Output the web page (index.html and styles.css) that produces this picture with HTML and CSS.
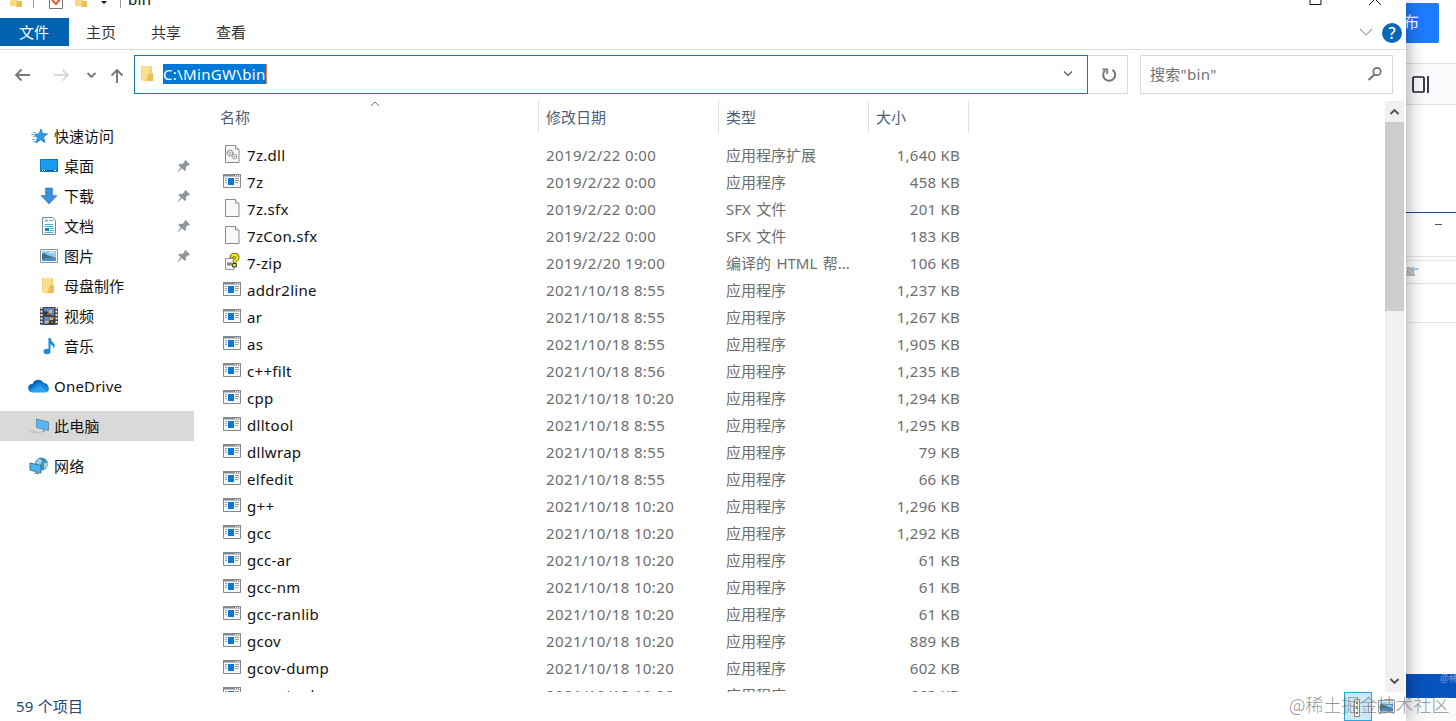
FILE: index.html
```
<!DOCTYPE html>
<html lang="zh-CN">

<head>
    <meta charset="UTF-8">
    <meta name="viewport" content="width=device-width, initial-scale=1.0">
    <title>bin</title>
    <link rel="stylesheet" href="styles.css">
</head>

<body>
    <!-- Icons -->
    <svg class="sprite">
        <symbol id="i-folder" viewBox="0 0 16 18">
            <path d="M1 1h10v15H4l-3-1z" fill="#f3d27a" />
            <path d="M2 1h8v13l-4 3-4-2z" fill="#fbe08f" />
            <path d="M9 8h4v8H6z" fill="#eebf58" />
            <path d="M10 1h2v8h-2z" fill="#f6d274" />
        </symbol>
        <symbol id="i-app" viewBox="0 0 18 14">
            <path d="M.5.5h17v13H.5z" fill="#f7f8f9" stroke="#85898d" />
            <path d="M0 0h18v2.500H0z" fill="#85898d" />
            <path d="M12 1h1v1h-1zM14 1h1v1h-1zM16 1h1v1h-1z" fill="#eee" />
            <path d="M5 4h6v7H5z" fill="#0a78d4" />
            <path d="M2 4.500h2M2 6.500h2M2 8.500h2M12 4.500h4M12 6.500h4M12 8.500h3" stroke="#9a9da0" />
        </symbol>
        <symbol id="i-file" viewBox="0 0 18 18">
            <path d="M2.5.5h10l3.500 3.500v13.500H2.500z" fill="#f8f8f8" stroke="#8b8b8b" />
            <path d="M12.500.5v3.500h3.500" fill="#fff" stroke="#8b8b8b" />
        </symbol>
        <symbol id="i-dll" viewBox="0 0 18 18">
            <use href="#i-file" />
            <circle cx="7" cy="8" r="2.800" fill="none" stroke="#8c9196" stroke-width="1.400" stroke-dasharray="1.500 .5" />
            <circle cx="7" cy="8" r="1" fill="none" stroke="#8c9196" stroke-width=".7" />
            <circle cx="11.500" cy="11.500" r="2.200" fill="#f8f8f8" stroke="#8c9196" stroke-width="1.200" stroke-dasharray="1.400 .5" />
            <circle cx="11.500" cy="11.500" r=".7" fill="#8c9196" />
        </symbol>
        <symbol id="i-chm" viewBox="0 0 18 18">
            <path d="M2.500 5.500h8.500v11H2.500z" fill="#f5f5f5" stroke="#999" />
            <path d="M4 9.500h5v3H4z" fill="#888" />
            <path d="M8.500 5Q8.500 2 11.500 2t3 2.500q0 1.500-2 2.500-1 .7-1 2.500" fill="none" stroke="#555300" stroke-width="4" />
            <path d="M8.500 4.500Q8.500 2 11.500 2t3 2.500q0 1.500-2 2.500-1 .7-1 2" fill="none" stroke="#f4ed16" stroke-width="2.400" />
            <path d="M9.700 10.500h3.600v3.500H9.700z" fill="#f4ed16" stroke="#333" />
        </symbol>
        <symbol id="i-star" viewBox="0 0 18 18">
            <path d="M11 2l1.500 4.600 5 .3-4 3.300 1.500 5.300-4.500-2.800-4.500 3.300 1.500-5.300-3.500-3.300 5-.5z" fill="#2f9ce8" stroke="#1c79bd" stroke-width=".8" />
            <path d="M3 5.500h3M1 7.500h4M3 9.500h3M2 12.500h3M3 14.500h3" stroke="#75b9e8" />
        </symbol>
        <symbol id="i-desktop" viewBox="0 0 18 18">
            <path d="M.5 2.500h17v12H.5z" fill="#1b9bf0" stroke="#0876c5" />
            <path d="M1 13.500h16" stroke="#075c9e" />
            <path d="M2 13.500h1M4 13.500h1M14 13.500h2" stroke="#fff" />
        </symbol>
        <symbol id="i-download" viewBox="0 0 18 18">
            <path d="M5.500 1h7v7.500H17L9 17 1 8.500h4.500z" fill="#3b8edb" stroke="#2878bd" stroke-width=".6" />
        </symbol>
        <symbol id="i-doc" viewBox="0 0 18 18">
            <path d="M2.500.5H13l2.500 3v14h-13z" fill="#fff" stroke="#7c878e" />
            <path d="M4.500 5l2-3 1 3M9 3.500h4M4.500 7.500h9M4.500 9.500h9M10 11.500h4M10 13.500h4M4.500 15.500h9" fill="none" stroke="#4caede" />
            <path d="M5 11h4v3H5z" fill="#277aa9" />
        </symbol>
        <symbol id="i-picture" viewBox="0 0 18 18">
            <path d="M.5 2.500h17v13H.5z" fill="#fff" stroke="#8b9297" />
            <path d="M2 4h14v10H2z" fill="#8dc9f1" />
            <path d="M2 7q3-2 5 1l9 3v3H2z" fill="#41717d" />
            <path d="M2 12q7-2 14-1v3H2z" fill="#4b8dc8" />
            <path d="M9 6q3-2 6 0" stroke="#e5f5ff" fill="none" />
        </symbol>
        <symbol id="i-video" viewBox="0 0 18 18">
            <path d="M0 0h18v18H0z" fill="#454545" />
            <path d="M1.500 0v18M16.500 0v18" stroke="#e8e8e8" stroke-width="2" stroke-dasharray="2 1.500" />
            <path d="M4 1h10v7H4zM4 10h10v7H4z" fill="#5c88c7" />
            <path d="M4 4l4 1 2 3H4zM9 14l5-2v5H8z" fill="#26384c" />
            <path d="M9 3h3v3H9zM5 14h4v2H5zM10 11h3v2h-3z" fill="#e4b83c" />
            <path d="M7 6h2v2H7zM11 14h2v2h-2z" fill="#c65132" />
        </symbol>
        <symbol id="i-music" viewBox="0 0 18 18">
            <path d="M9.500 1v12.500" stroke="#138ee0" stroke-width="2" />
            <path d="M9 1h1.500q.5 3 3 5t0 6q.5-3.500-3.500-5z" fill="#138ee0" />
            <ellipse cx="7" cy="14.500" rx="3.500" ry="2.700" fill="#138ee0" />
        </symbol>
        <symbol id="i-cloud" viewBox="0 0 22 16">
            <path d="M4 14a4 4 0 0 1 .5-8A6 6 0 0 1 15.500 5a4.800 4.800 0 0 1 2.500 9z" fill="#0868bd" />
            <path d="M8 6l4-1.500 8 4q2 5-2 5.500H4q-2-.2-3-2z" fill="#1687dc" />
            <path d="M2 13l10-5 8 5q-1 1.500-3 1.500H4.500Q3 14.500 2 13z" fill="#2ba2ed" />
        </symbol>
        <symbol id="i-pc" viewBox="0 0 22 18">
            <path d="M8.500 2l12 3v8.500l-12-3z" fill="#52b6f5" stroke="#55869f" stroke-width=".8" />
            <path d="M15 12.500v1.500l-3 .5 5 1v-2.500" fill="#9aa6ad" />
            <path d="M1 14.500l7 1.500M4 13.500l11 4" stroke="#b5b5b5" stroke-width=".8" />
        </symbol>
        <symbol id="i-network" viewBox="0 0 20 18">
            <circle cx="12.500" cy="7" r="6.500" fill="#428fb3" />
            <path d="M9 2q4 0 4 3l-3 4-3-3zM15 6l4 0q0 5-4 6z" fill="#a3d0dc" />
            <path d="M1 6l11 2.500v7.500L1 13z" fill="#47b4f4" stroke="#337897" />
            <path d="M6 14v2l-2 .5 6 1v-2.500" fill="#8197a2" />
        </symbol>
        <symbol id="i-pin" viewBox="0 0 14 14">
            <path d="M8.500 1L13 5.500l-1.200 1-1-.3-2 2 .2 2.800-1.200 1.100-2.800-2.800L1 13l-.5-.5 3.300-4L1.300 6l1.200-1.200 2.800.3 2.200-2.200-.2-1z" fill="#90979c" />
        </symbol>
    </svg>

    <main class="desktop">
        <section class="explorer">
            <!-- Title bar -->
            <header class="titlebar">
                <svg width="140" height="10" viewBox="0 0 140 10">
                    <path d="M10 0h8v6h-8z" fill="#f8d984" />
                    <path d="M17 1h5v6h-6z" fill="#eebf58" />
                    <path d="M33.500 0v8M120.500 0v8" stroke="#999" />
                    <path d="M49.500 0v8.500h13V0" fill="#fff" stroke="#777" />
                    <path d="M52 0l4 4 5-6" fill="none" stroke="#e45a21" stroke-width="2" />
                    <path d="M75 0h8v6h-8z" fill="#f8d984" />
                    <path d="M82 1h5v6h-6z" fill="#eebf58" />
                    <path d="M101 1h6l-3 3z" fill="#111" />
                </svg>
                <span class="window-title">bin</span>
                <svg class="window-buttons" width="70" height="6" viewBox="0 0 70 6">
                    <path d="M.5 0v4.500h11V0M59.500 5l6-6 6 6" fill="none" stroke="#111" transform="translate(-.5)" />
                </svg>
            </header>

            <!-- Ribbon tabs -->
            <nav class="tabs">
                <span class="tab active">文件</span>
                <span class="tab">主页</span>
                <span class="tab">共享</span>
                <span class="tab">查看</span>
                <svg class="ribbon-toggle" width="14" height="8" viewBox="0 0 14 8">
                    <path d="M1 1l6 6 6-6" fill="none" stroke="#a5a5a5" stroke-width="1.200" />
                </svg>
                <span class="help">?</span>
            </nav>

            <!-- Address bar -->
            <div class="address-row">
                <svg class="nav-arrows" width="134" height="39" viewBox="0 0 134 39" fill="none">
                    <path d="M30 20H16M21.500 14.500L16 20l5.500 5.500" stroke="#767676" stroke-width="1.800" />
                    <path d="M54 20h14M62.500 14.500L68 20l-5.500 5.500" stroke="#dadada" stroke-width="1.800" />
                    <path d="M87.500 18l4 4 4-4" stroke="#767676" stroke-width="1.800" />
                    <path d="M117 28V15M111.500 20.500L117 15l5.500 5.500" stroke="#767676" stroke-width="1.900" />
                </svg>
                <div class="address">
                    <svg width="16" height="18"><use href="#i-folder" /></svg>
                    <span class="path">C:\MinGW\bin</span>
                    <svg class="address-arrow" width="10" height="6" viewBox="0 0 10 6">
                        <path d="M1 .5l4 4 4-4" fill="none" stroke="#555" stroke-width="1.200" />
                    </svg>
                </div>
                <div class="refresh">
                    <svg width="18" height="18" viewBox="0 0 18 18" fill="none" stroke="#777">
                        <path d="M12.500 3.800A6 6 0 1 1 5 4.500" stroke-width="2" />
                        <path d="M2.500 3.300h4.700V8" stroke-width="1.800" />
                    </svg>
                </div>
                <div class="search">
                    <span>搜索"bin"</span>
                    <svg width="16" height="16" viewBox="0 0 16 16" fill="none" stroke="#707070">
                        <circle cx="10" cy="5.500" r="3.700" stroke-width="1.700" />
                        <path d="M7.500 8.500L1.500 14" stroke-width="2" />
                    </svg>
                </div>
            </div>

            <div class="content">
                <!-- Sidebar -->
                <aside class="sidebar" id="sidebar"></aside>

                <!-- File list -->
                <section class="files">
                    <div class="file-row file-head">
                        <span>名称<svg class="sort" width="10" height="6" viewBox="0 0 10 6">
                                <path d="M1 5l4-4 4 4" fill="none" stroke="#777" />
                            </svg></span>
                        <span>修改日期</span>
                        <span>类型</span>
                        <span>大小</span>
                    </div>
                    <div class="file-list" id="file-list"></div>
                </section>

                <!-- Scrollbar -->
                <div class="scrollbar">
                    <svg width="19" height="21" viewBox="0 0 19 21">
                        <path d="M5.500 13l4-4 4 4" fill="none" stroke="#505050" stroke-width="1.900" />
                    </svg>
                    <div class="thumb"></div>
                    <svg class="scroll-down" width="19" height="21" viewBox="0 0 19 21">
                        <path d="M5.500 8l4 4 4-4" fill="none" stroke="#505050" stroke-width="1.900" />
                    </svg>
                </div>
            </div>

            <footer class="status">
                <span>59 个项目</span>
                <div class="views">
                    <div class="view selected">
                        <svg width="9" height="18" viewBox="0 0 9 18">
                            <path d="M.5.5h5v17h-5z" fill="#fff" stroke="#888" />
                            <path d="M3 3v2M3 8v2M3 13v2" stroke="#b67042" stroke-width="2" />
                        </svg>
                    </div>
                    <svg class="view-icon" width="17" height="15" viewBox="0 1 18 16"><use href="#i-picture" width="18" height="18" /></svg>
                </div>
            </footer>
        </section>

        <!-- Page behind the window -->
        <section class="behind">
            <div class="publish-row"><span class="publish">布</span></div>
            <div class="tool-row">
                <svg width="18" height="18" viewBox="0 0 18 18" fill="none" stroke="#1d2129">
                    <rect x="1" y="1" width="11" height="15" rx="1" stroke-width="1.700" />
                    <path d="M16 0v17" stroke-width="1.700" />
                </svg>
            </div>
            <div class="blank"></div>
            <div class="inner-title"><i></i></div>
            <div class="inner-gap"></div>
            <div class="inner-search">戤"</div>
            <div class="inner-line"></div>
            <div class="inner-page"></div>
            <div class="taskbar">@稀</div>
            <div class="page-end"></div>
        </section>
        <div class="watermark">@稀土掘金技术社区</div>
    </main>

    <script>
        const places = [
            { name: "快速访问", icon: "star", type: "root" },
            { name: "桌面", icon: "desktop", pin: true },
            { name: "下载", icon: "download", pin: true },
            { name: "文档", icon: "doc", pin: true },
            { name: "图片", icon: "picture", pin: true },
            { name: "母盘制作", icon: "folder" },
            { name: "视频", icon: "video" },
            { name: "音乐", icon: "music" },
            { name: "OneDrive", icon: "cloud", type: "root group" },
            { name: "此电脑", icon: "pc", type: "root group current" },
            { name: "网络", icon: "network", type: "root group" }
        ];

        const files = [
            ["7z.dll", "2019/2/22 0:00", "应用程序扩展", "1,640", "dll"],
            ["7z", "2019/2/22 0:00", "应用程序", "458"],
            ["7z.sfx", "2019/2/22 0:00", "SFX 文件", "201", "file"],
            ["7zCon.sfx", "2019/2/22 0:00", "SFX 文件", "183", "file"],
            ["7-zip", "2019/2/20 19:00", "编译的 HTML 帮...", "106", "chm"],
            ["addr2line", "2021/10/18 8:55", "应用程序", "1,237"],
            ["ar", "2021/10/18 8:55", "应用程序", "1,267"],
            ["as", "2021/10/18 8:55", "应用程序", "1,905"],
            ["c++filt", "2021/10/18 8:56", "应用程序", "1,235"],
            ["cpp", "2021/10/18 10:20", "应用程序", "1,294"],
            ["dlltool", "2021/10/18 8:55", "应用程序", "1,295"],
            ["dllwrap", "2021/10/18 8:55", "应用程序", "79"],
            ["elfedit", "2021/10/18 8:55", "应用程序", "66"],
            ["g++", "2021/10/18 10:20", "应用程序", "1,296"],
            ["gcc", "2021/10/18 10:20", "应用程序", "1,292"],
            ["gcc-ar", "2021/10/18 10:20", "应用程序", "61"],
            ["gcc-nm", "2021/10/18 10:20", "应用程序", "61"],
            ["gcc-ranlib", "2021/10/18 10:20", "应用程序", "61"],
            ["gcov", "2021/10/18 10:20", "应用程序", "889"],
            ["gcov-dump", "2021/10/18 10:20", "应用程序", "602"],
            ["gcov-tool", "2021/10/18 10:20", "应用程序", "663"]
        ];

        document.getElementById("sidebar").innerHTML = places.map(place => `
            <div class="place ${place.type || ""}">
                <svg class="place-icon"><use href="#i-${place.icon}" /></svg>
                <span>${place.name}</span>
                ${place.pin ? '<svg class="pin"><use href="#i-pin" /></svg>' : ""}
            </div>
        `).join('');

        document.getElementById("file-list").innerHTML = files.map(([name, date, type, size, icon = "app"]) => `
            <div class="file-row">
                <span class="name"><svg class="icon-${icon}"><use href="#i-${icon}" /></svg>${name}</span>
                <span class="date">${date}</span>
                <span class="type">${type}</span>
                <span class="size">${size} KB</span>
            </div>
        `).join('');
    </script>
</body>

</html>
```
FILE: styles.css
```
/* General Styles */
* {
    margin: 0;
    padding: 0;
    box-sizing: border-box;
}

body {
    font-family: 'Noto Sans', 'Noto Sans CJK SC', sans-serif;
    font-size: 15px;
    line-height: 20px;
    color: #111;
    background: #fff;
    overflow: hidden;
}

svg {
    display: block;
    flex-shrink: 0;
}

.sprite {
    display: none;
}

.desktop {
    display: flex;
    position: relative;
    width: 1456px;
    height: 721px;
    overflow: hidden;
}

/* Explorer window */
.explorer {
    display: flex;
    flex-direction: column;
    position: relative;
    z-index: 1;
    width: 1406px;
    height: 721px;
    background: #fff;
    box-shadow: 0 0 18px rgba(0, 0, 0, 0.4);
}

.titlebar {
    display: flex;
    align-items: flex-start;
    height: 18px;
}

.window-title {
    margin: -11px 0 0 -12px;
    letter-spacing: 0.3px;
}

.window-buttons {
    margin-left: auto;
    margin-right: 26px;
    overflow: visible;
}

/* Ribbon tabs */
.tabs {
    display: flex;
    align-items: center;
    height: 32px;
    padding-bottom: 3px;
    border-bottom: 1px solid #dadbdc;
    color: #333;
}

.tab {
    width: 65px;
    height: 28px;
    padding-right: 1px;
    line-height: 28px;
    text-align: center;
}

.tab.active {
    width: 69px;
    background: #0063b1;
    color: #fff;
}

.ribbon-toggle {
    margin-left: auto;
}

.help {
    width: 20px;
    height: 20px;
    margin: 2px 4px 0 9px;
    border-radius: 50%;
    background: #0868b4;
    color: #fff;
    font-size: 16px;
    font-weight: 500;
    text-align: center;
}

/* Address bar */
.address-row {
    display: flex;
    height: 51px;
    padding-top: 5px;
}

.address {
    display: flex;
    align-items: center;
    width: 954px;
    height: 39px;
    padding: 0 14px 2px 5px;
    border: 1px solid #187aab;
}

.path {
    margin-left: 7px;
    background: #0078d7;
    color: #fff;
    border-right: 1px solid #e5884c;
    letter-spacing: 0.33px;
}

.address-arrow {
    margin-left: auto;
}

.refresh,
.search {
    display: flex;
    align-items: center;
    height: 39px;
    border: 1px solid #d9d9d9;
}

.refresh {
    justify-content: center;
    width: 40px;
    padding-left: 2px;
    border-left: none;
}

.search {
    justify-content: space-between;
    width: 253px;
    margin-left: 12px;
    padding: 0 9px 1px 9px;
    color: #727272;
    letter-spacing: 0.3px;
}

/* Sidebar */
.content {
    display: flex;
    height: 591px;
}

.sidebar {
    width: 197px;
    padding-top: 20px;
    border-right: 1px solid #fafafa;
}

.place {
    display: flex;
    align-items: center;
    width: 194px;
    height: 30px;
    padding: 0 3px 0 40px;
}

.place-icon {
    width: 18px;
    height: 18px;
    margin-right: 6px;
}

.place.root {
    padding-left: 30px;
}

.place.group {
    margin-top: 10px;
    padding-left: 28px;
    letter-spacing: 0.2px;
}

.place.group .place-icon {
    width: 22px;
    margin-right: 4px;
}

.place.current {
    background: #d9d9d9;
}

.pin {
    width: 14px;
    height: 14px;
    margin-left: auto;
}

/* File list */
.files {
    width: 1188px;
    overflow: hidden;
}

.file-row {
    display: grid;
    grid-template-columns: 342px 180px 150px 100px;
    height: 27px;
    line-height: 26px;
    white-space: nowrap;
    color: #6d6d6d;
}

.file-row span {
    padding-left: 7px;
}

.file-head {
    height: 32px;
    line-height: 32px;
    margin-bottom: 9px;
    color: #4c607a;
}

.file-head span {
    border-right: 1px solid #e2e2e2;
}

.file-head span:first-child {
    display: flex;
    padding-left: 23px;
}

.sort {
    margin-left: 120px;
}

.file-row .name {
    display: flex;
    padding-left: 26px;
    color: #111;
    letter-spacing: 0.3px;
}

.name svg {
    width: 18px;
    height: 18px;
    margin: 3px 6px 0 0;
}

.name .icon-app {
    height: 14px;
    margin-top: 5px;
}

.date {
    letter-spacing: 0.38px;
}

.type {
    word-spacing: 1.5px;
}

.file-row .size {
    padding-right: 9px;
    text-align: right;
    letter-spacing: 0.25px;
}

/* Scrollbar */
.scrollbar {
    display: flex;
    flex-direction: column;
    width: 19px;
    background: #f0f0f0;
}

.thumb {
    height: 189px;
    background: #cdcdcd;
}

.scroll-down {
    margin-top: auto;
}

/* Status bar */
.status {
    display: flex;
    justify-content: space-between;
    height: 29px;
    padding: 4px 11px 0 16px;
    color: #24466f;
    letter-spacing: 0.2px;
}

.views {
    display: flex;
    gap: 6px;
    margin-top: -4px;
}

.view {
    display: flex;
    justify-content: center;
    width: 28px;
    height: 29px;
    padding-top: 6px;
    border: 1px solid #2ca5df;
    background: #cce8f7;
}

.view-icon {
    margin-top: 7px;
}

/* Page behind the window */
.behind {
    display: flex;
    flex-direction: column;
    width: 50px;
    height: 721px;
}

.publish-row {
    height: 64px;
    padding-top: 3px;
    border-bottom: 1px solid #dedfe2;
}

.publish {
    display: block;
    width: 33px;
    height: 40px;
    padding-right: 20px;
    border-radius: 0 2px 2px 0;
    background: #1e7bff;
    color: #fff;
    font-size: 16px;
    line-height: 39px;
    direction: rtl;
}

.tool-row {
    height: 41px;
    padding: 12px 0 0 6px;
    border-bottom: 1px solid #dedfe2;
    background: #fafbfc;
}

.blank {
    height: 107px;
}

.inner-title {
    display: flex;
    height: 45px;
    padding: 11px 0 0 29px;
    border-top: 1px solid #164b91;
    border-bottom: 1px solid #e4e4e4;
}

.inner-title i {
    width: 7px;
    height: 1px;
    background: #555;
}

.inner-gap {
    height: 4px;
    border-bottom: 1px solid #e8e8e8;
}

.inner-search {
    height: 23px;
    border-bottom: 1px solid #dedede;
    color: #888;
    font-size: 9px;
    line-height: 22px;
}

.inner-line {
    height: 39px;
    border-bottom: 1px solid #e5e5e5;
}

.inner-page {
    height: 351px;
}

.taskbar {
    height: 24px;
    padding-left: 34px;
    background: #0752bd;
    color: #7c9dd4;
    font-size: 10px;
    line-height: 9px;
    white-space: nowrap;
    overflow: hidden;
}

.page-end {
    height: 23px;
    background: #fafafa;
}

.watermark {
    position: absolute;
    z-index: 2;
    left: 1289px;
    top: 691px;
    font-family: 'Noto Sans CJK SC', sans-serif;
    font-size: 18px;
    font-weight: 300;
    line-height: 26px;
    white-space: nowrap;
    color: rgba(110, 110, 110, 0.75);
}
```
